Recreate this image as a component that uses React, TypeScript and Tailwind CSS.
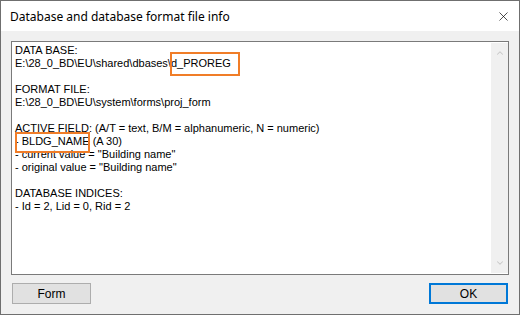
import { X, ChevronUp, ChevronDown } from 'lucide-react';

const lines = [
  'DATA BASE:',
  'E:\\28_0_BD\\EU\\shared\\dbases\\d_PROREG',
  '',
  'FORMAT FILE:',
  'E:\\28_0_BD\\EU\\system\\forms\\proj_form',
  '',
  'ACTIVE FIELD: (A/T = text, B/M = alphanumeric, N = numeric)',
  '- BLDG_NAME (A 30)',
  '- current value = "Building name"',
  '- original value = "Building name"',
  '',
  'DATABASE INDICES:',
  '- Id = 2, Lid = 0, Rid = 2',
];

export default function App() {
  return (
    <div className="w-[520px] h-[315px] flex flex-col bg-[#f0f0f0] border border-[#6f6f6f] overflow-hidden">
      {/* title bar */}
      <div className="h-[30px] bg-white flex items-center justify-between pl-[9px] pr-[8px] pt-[1px] shrink-0">
        <span className="text-[12px] text-black" style={{ fontFamily: '"Noto Sans", sans-serif' }}>
          Database and database format file info
        </span>
        <X size={15} strokeWidth={1.1} className="text-black" />
      </div>

      <div className="flex flex-col px-[10px] pt-[10px]" style={{ fontFamily: '"Liberation Sans", Arial, sans-serif' }}>
        {/* info box */}
        <div className="relative h-[234px] bg-white border border-[#7a7a7a] flex">
          <div className="flex-1 pl-[3px] pt-[2px] text-[11px] leading-[13px] text-black">
            {lines.map((l, i) => (
              <div key={i} className="h-[13px] whitespace-pre">{l}</div>
            ))}
          </div>
          <div className="w-[17px] my-[1px] bg-[#f0f0f0] flex flex-col justify-between items-center py-[5px]">
            <ChevronUp size={10} strokeWidth={2.5} className="text-[#c8c8c8]" />
            <ChevronDown size={10} strokeWidth={2.5} className="text-[#c8c8c8]" />
          </div>

          {/* annotation boxes */}
          <div className="absolute left-[158px] top-[10px] w-[70px] h-[24px] border-2 border-[#f07d28]" />
          <div className="absolute left-[3px] top-[90px] w-[75px] h-[21px] border-2 border-[#f07d28]" />
        </div>

        {/* buttons */}
        <div className="flex justify-between mt-[8px] px-[1px]">
          <button className="w-[79px] h-[21px] bg-[#e1e1e1] border border-[#adadad] text-[12px] text-black">
            Form
          </button>
          <button className="w-[79px] h-[21px] bg-[#e1e1e1] border-2 border-[#0078d7] text-[12px] text-black">
            OK
          </button>
        </div>
      </div>
    </div>
  );
}
